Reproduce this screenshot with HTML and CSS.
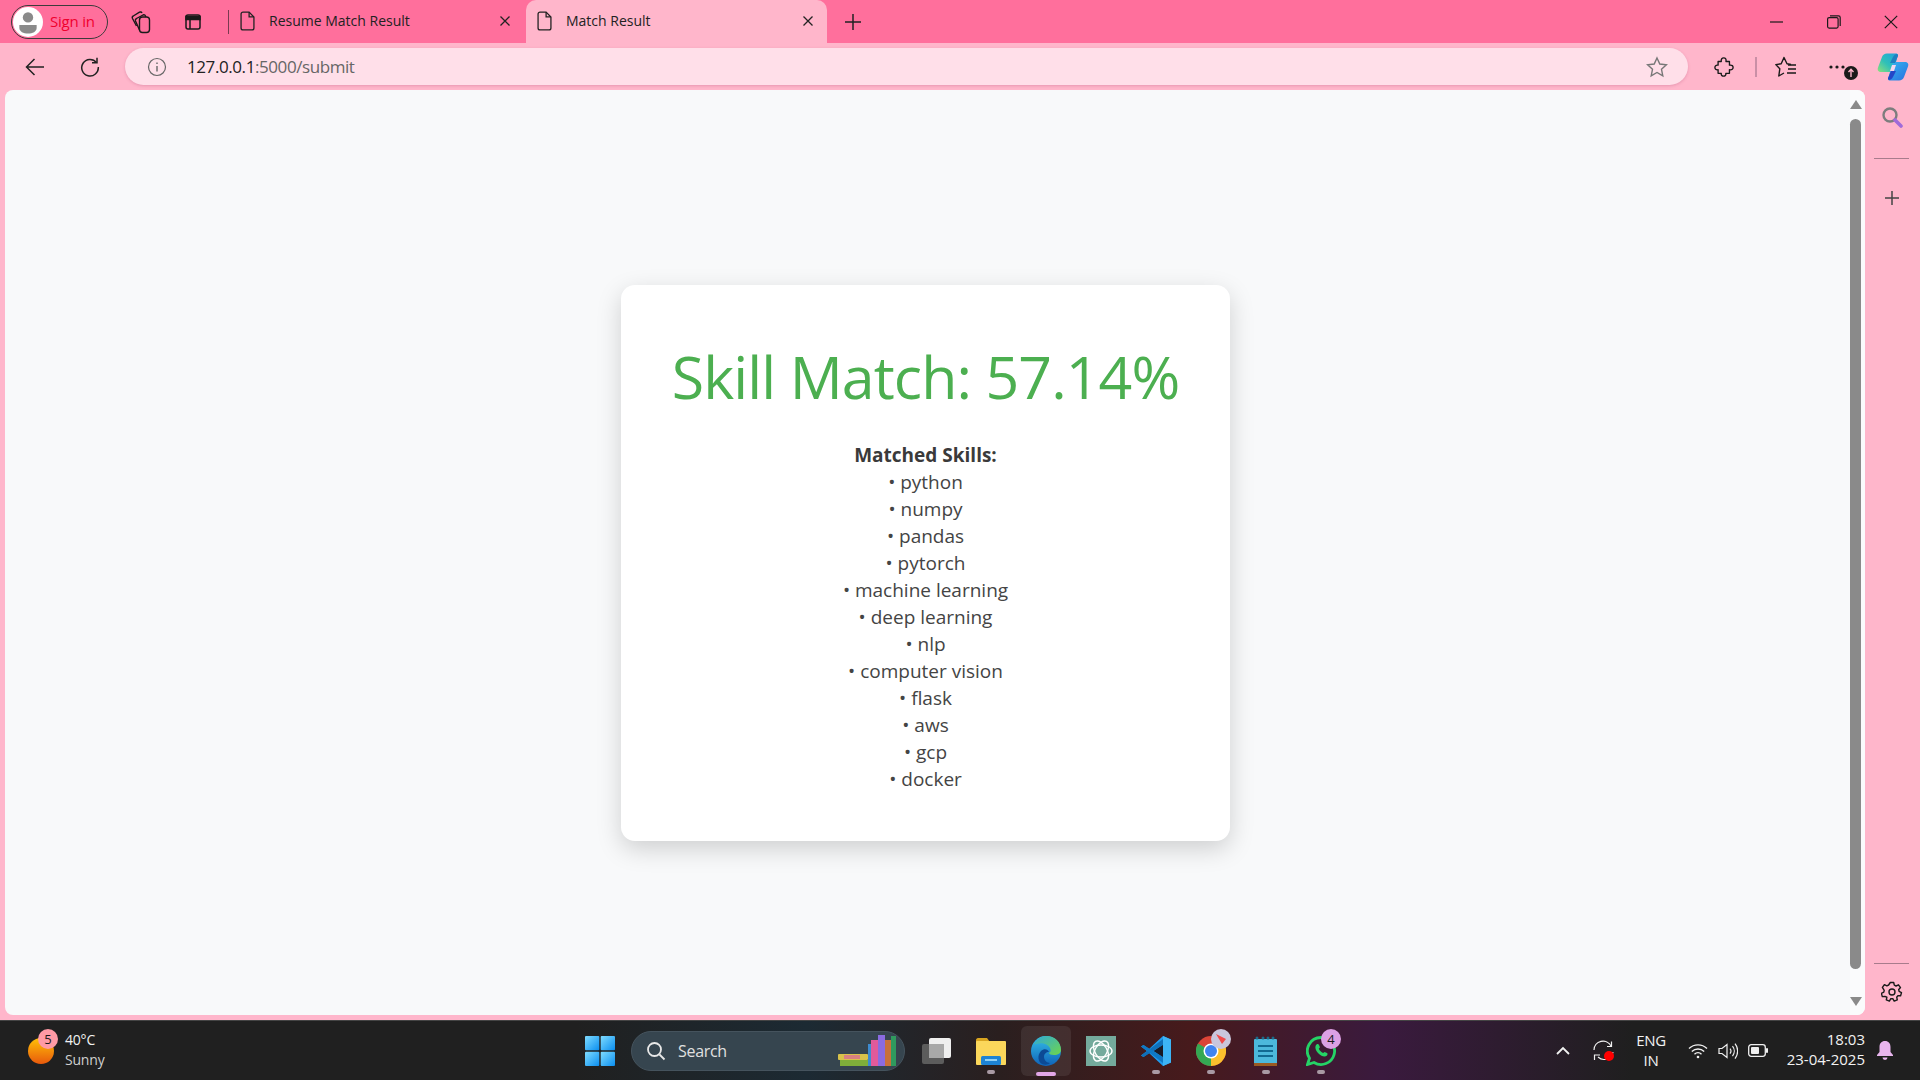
FILE: index.html
```html
<!DOCTYPE html>
<html lang="en">
<head>
<meta charset="utf-8">
<title>Match Result</title>
<link rel="stylesheet" href="styles.css">
</head>
<body>
<div class="browser">
  <header class="tabstrip">
    <div class="profile">
      <span class="avatar"><svg width="30" height="30" viewBox="0 0 26 26"><circle cx="13" cy="13" r="13" fill="#fff"/><circle cx="13" cy="9" r="4.500" fill="#8a8a8a"/><path d="M5.500 15.500h15v2.500c0 3.500-3.500 5-7.500 5s-7.500-1.500-7.500-5z" fill="#8a8a8a"/></svg></span>
      <span class="signin">Sign in</span>
    </div>
    <button class="strip-btn collections"><svg width="22" height="24" viewBox="0 0 22 24" fill="none" stroke="#1a1a1a" stroke-width="1.400"><rect x="9.500" y="7" width="10" height="15.500" rx="3"/><path d="M9.500 20 5.500 11c-.4-1 0-2 1-2.500L13 5c1-.5 2 0 2.500 1l.5 1"/><path d="M6.500 16 2.500 8.500c-.5-1-.2-2 .8-2.500L9.500 2.200c1-.5 2-.2 2.500.8"/></svg></button>
    <button class="strip-btn verttabs"><svg width="18" height="18" viewBox="0 0 18 18" fill="none" stroke="#1a1a1a" stroke-width="1.500"><rect x="2" y="2" width="14" height="14" rx="2"/><path d="M2 3.500h14v3H2z" fill="#1a1a1a"/><path d="M6 6v10"/></svg></button>
    <span class="strip-sep"></span>
    <div class="tab">
      <svg class="doc" width="15" height="20" viewBox="1 1 14 18" fill="none" stroke="#222" stroke-width="1.200"><path d="M2 3.500C2 2.500 2.800 1.700 3.800 1.700H9.500L14 6.200V16.500c0 1-.8 1.800-1.800 1.800H3.800c-1 0-1.800-.8-1.800-1.800z"/><path d="M9.500 1.700V6.200H14"/></svg>
      <span class="tab-title">Resume Match Result</span>
      <svg class="tab-close" width="12" height="12" viewBox="0 0 12 12" stroke="#222" stroke-width="1.300"><path d="M1.500 1.500l9 9M10.500 1.500l-9 9"/></svg>
    </div>
    <div class="tab active">
      <svg class="doc" width="15" height="20" viewBox="1 1 14 18" fill="none" stroke="#222" stroke-width="1.200"><path d="M2 3.500C2 2.500 2.800 1.700 3.800 1.700H9.500L14 6.200V16.500c0 1-.8 1.800-1.800 1.800H3.800c-1 0-1.800-.8-1.800-1.800z"/><path d="M9.500 1.700V6.200H14"/></svg>
      <span class="tab-title">Match Result</span>
      <svg class="tab-close" width="12" height="12" viewBox="0 0 12 12" stroke="#222" stroke-width="1.300"><path d="M1.500 1.500l9 9M10.500 1.500l-9 9"/></svg>
    </div>
    <svg class="newtab" width="18" height="18" viewBox="0 0 18 18" stroke="#222" stroke-width="1.500"><path d="M9 1v16M1 9h16"/></svg>
    <div class="window-ctrls">
      <svg width="14" height="14" viewBox="0 0 14 14" stroke="#1a1a1a" stroke-width="1.200"><path d="M0 7h13"/></svg>
      <svg width="14" height="14" viewBox="0 0 14 14" fill="none" stroke="#1a1a1a" stroke-width="1.200"><rect x=".6" y="2.600" width="10.500" height="10.500" rx="1.500"/><path d="M3 .8h8.500c1 0 1.700.7 1.700 1.700V11"/></svg>
      <svg width="14" height="14" viewBox="0 0 14 14" stroke="#1a1a1a" stroke-width="1.200"><path d="M.8.800l12.400 12.400M13.200.800L.8 13.200"/></svg>
    </div>
  </header>

  <nav class="toolbar">
    <svg class="nav-back" width="20" height="20" viewBox="0 0 20 20" fill="none" stroke="#222" stroke-width="1.500"><path d="M19 10H1.500M9.500 2l-8 8 8 8"/></svg>
    <svg class="nav-reload" width="20" height="20" viewBox="0 0 20 20" fill="none" stroke="#222" stroke-width="1.500"><path d="M16.500 5.500A8.300 8.300 0 1 0 18.300 10"/><path d="M17 .8v5h-5"/></svg>
    <div class="omnibox">
      <svg class="info" width="20" height="20" viewBox="0 0 20 20" fill="none" stroke="#666" stroke-width="1.200"><circle cx="10" cy="10" r="8.500"/><path d="M10 9v5.500M10 5.500v1.500" stroke-width="1.400"/></svg>
      <span class="url"><span class="host">127.0.0.1</span>:5000/submit</span>
      <svg class="star" width="22" height="22" viewBox="0 0 22 22" fill="none" stroke="#777" stroke-width="1.400"><path d="M11 2l2.800 6 6.600.8-4.900 4.500 1.300 6.500L11 16.500l-5.800 3.300 1.300-6.500L1.600 8.800 8.200 8z"/></svg>
    </div>
    <svg class="tool ext" width="20" height="20" viewBox="0 0 22 22" fill="none" stroke="#1a1a1a" stroke-width="1.500" stroke-linejoin="round"><path d="M4.500 5H8C7.500 2 9 1 10.700 1S13.700 2 13.200 5H17V9c3-.5 4 1 4 2.500s-1 3-4 2.500v4H13c.5 2-1 3-2.500 3S7.500 20 8 18H4.500V14C2 14.500 1 13 1 11.500S2 8.500 4.500 9z"/></svg>
    <span class="tool-sep"></span>
    <svg class="tool favs" width="22" height="22" viewBox="0 0 22 22" fill="none" stroke="#1a1a1a" stroke-width="1.400" stroke-linejoin="round"><path d="M16 8.500 12 7.800 9 1.500 6.200 7.800 0.800 8.600 4.800 12.800 3.800 20 9 17"/><path d="M13 9h8M13 13h8M12 17h9"/></svg>
    <div class="more">
      <svg width="16" height="4" viewBox="0 0 16 4" fill="#1a1a1a"><circle cx="2" cy="2" r="1.600"/><circle cx="8" cy="2" r="1.600"/><circle cx="14" cy="2" r="1.600"/></svg>
      <svg class="more-badge" width="14" height="14" viewBox="0 0 14 14"><circle cx="7" cy="7" r="7" fill="#1a1a1a"/><path d="M7 11V4M4.500 6L7 3.300 9.500 6" stroke="#ffb6cb" stroke-width="1.400" fill="none"/></svg>
    </div>
    <svg class="copilot" width="32" height="28" viewBox="0 0 32 28">
      <defs>
        <linearGradient id="cpa" x1="1" y1="0" x2="0" y2="1"><stop offset="0" stop-color="#1f9fe0"/><stop offset=".55" stop-color="#2fc0b8"/><stop offset="1" stop-color="#8fe07a"/></linearGradient>
        <linearGradient id="cpb" x1="0" y1="0" x2="1" y2="1"><stop offset="0" stop-color="#35b8f0"/><stop offset="1" stop-color="#2a6fe0"/></linearGradient>
      </defs>
      <path d="M10 .5h9c1 0 1.800.5 2 1.500L17 16c-.7 2-2 3-4 3H4c-2.500 0-4-1.700-3-4.500L5 4c.8-2.300 2.500-3.500 5-3.500z" fill="url(#cpa)"/>
      <path d="M22 27.500h-9c-1 0-1.800-.5-2-1.500l4-14c.7-2 2-3 4-3h9c2.500 0 4 1.700 3 4.500L27 24c-.8 2.300-2.500 3.500-5 3.500z" fill="url(#cpb)"/>
      <path d="M12 27c-1-.5-1-1-1-2l3-7h5l-3 6c-1 2-2.500 3-4 3z" fill="#2447c8"/>
      <path d="M20 1c1 .5 1 1 1 2l-3 7h-5l3-6c1-2 2.500-3 4-3z" fill="#1f7fc0"/>
      <path d="M15 12h4l-2 6h-4z" fill="#f4d7ee"/>
    </svg>
  </nav>

  <div class="workarea">
    <div class="viewport">
      <main class="page">
        <section class="card">
          <h1 class="score">Skill Match: 57.14%</h1>
          <div class="skills">
            <p class="skills-title">Matched Skills:</p>
            <p>• python</p>
            <p>• numpy</p>
            <p>• pandas</p>
            <p>• pytorch</p>
            <p>• machine learning</p>
            <p>• deep learning</p>
            <p>• nlp</p>
            <p>• computer vision</p>
            <p>• flask</p>
            <p>• aws</p>
            <p>• gcp</p>
            <p>• docker</p>
          </div>
        </section>
      </main>
      <div class="scrollbar">
        <span class="arrow up"></span>
        <span class="thumb"></span>
        <span class="arrow down"></span>
      </div>
    </div>
    <aside class="sidebar">
      <svg class="side-search" width="22" height="22" viewBox="0 0 22 22" fill="none"><circle cx="9" cy="9" r="6.500" stroke="#7d7d7d" stroke-width="2.400"/><path d="M14 14l6 6" stroke="#a06bd8" stroke-width="3.600" stroke-linecap="round"/></svg>
      <span class="side-div"></span>
      <svg class="side-plus" width="16" height="16" viewBox="0 0 16 16" stroke="#444" stroke-width="1.500"><path d="M8 1v14M1 8h14"/></svg>
      <span class="side-spring"></span>
      <span class="side-div"></span>
      <svg class="side-gear" width="22" height="22" viewBox="0 0 22 22" fill="none" stroke="#1a1a1a" stroke-width="1.400"><circle cx="11" cy="11" r="3"/><path d="M9.300 1.500h3.400l.6 2.700 1.700.8 2.500-1.200 2 2.800-1.800 1.900.4 1.900 2.400 1.200-.9 3.200-2.700-.1-1.200 1.500.6 2.700-3.100 1.200-1.400-2.400h-2l-1.400 2.400-3.100-1.200.6-2.700L4 15.500l-2.700.1-.9-3.200 2.400-1.200.4-1.900L1.400 6.400l2-2.800 2.500 1.200 1.700-.8z" stroke-linejoin="round"/></svg>
    </aside>
  </div>

  <footer class="taskbar">
    <div class="weather">
      <div class="sun">
        <svg width="26" height="28" viewBox="0 0 26 28"><defs><linearGradient id="sunf" x1="0" y1="0" x2="0" y2="1"><stop offset="0" stop-color="#ffc107"/><stop offset="1" stop-color="#e8590c"/></linearGradient></defs><circle cx="13" cy="14" r="13" fill="url(#sunf)"/></svg>
        <span class="sun-badge">5</span>
      </div>
      <div class="weather-text"><span class="temp">40°C</span><span class="cond">Sunny</span></div>
    </div>
    <div class="center-icons">
      <svg class="winlogo" width="30" height="30" viewBox="0 0 30 30"><defs><linearGradient id="win" x1="0" y1="0" x2="1" y2="1"><stop offset="0" stop-color="#7fdcff"/><stop offset="1" stop-color="#0a8ef0"/></linearGradient></defs><rect x="0" y="0" width="14.300" height="14.300" rx="1" fill="url(#win)"/><rect x="15.700" y="0" width="14.300" height="14.300" rx="1" fill="url(#win)"/><rect x="0" y="15.700" width="14.300" height="14.300" rx="1" fill="url(#win)"/><rect x="15.700" y="15.700" width="14.300" height="14.300" rx="1" fill="url(#win)"/></svg>
      <div class="search">
        <svg width="20" height="20" viewBox="0 0 20 20" fill="none" stroke="#e8e8e8" stroke-width="1.800"><circle cx="8.500" cy="8.500" r="6.500"/><path d="M13.500 13.500l5 5"/></svg>
        <span class="search-label">Search</span>
        <svg class="books" width="66" height="32" viewBox="0 0 66 32"><rect x="2" y="19" width="30" height="6" rx="1" fill="#d8c24a"/><rect x="8" y="20" width="16" height="4" fill="#d88080"/><rect x="4" y="25" width="28" height="6" fill="#7fae3a"/><rect x="32" y="9" width="3" height="22" fill="#3d8bd0"/><rect x="35" y="5" width="7" height="26" fill="#e25a9a"/><rect x="42" y="0" width="7" height="31" fill="#8a6be0"/><rect x="49" y="5" width="6" height="26" fill="#c8703a"/><rect x="55" y="1" width="5" height="30" fill="#2f9a5e"/></svg>
      </div>
      <div class="task-icon taskview"><svg width="30" height="30" viewBox="0 0 30 30"><rect x="1" y="8" width="22" height="20" rx="2" fill="#5c5c5c"/><rect x="8" y="2" width="22" height="20" rx="2" fill="#efefef"/><rect x="8" y="8" width="15" height="14" fill="#a8a8a8"/></svg></div>
      <div class="task-icon pinned"><svg width="30" height="28" viewBox="0 0 30 28"><path d="M0 3c0-1 .8-2 2-2h9l3 4H0z" fill="#d9a520"/><rect x="0" y="4" width="30" height="24" rx="1" fill="#fbd75b"/><rect x="5" y="19" width="20" height="9" rx="1.500" fill="#1d83d4"/><rect x="9" y="22" width="12" height="2" fill="#8fd0f5"/></svg><span class="dot"></span></div>
      <div class="task-icon edge-tile">
        <svg width="30" height="30" viewBox="0 0 30 30"><defs><linearGradient id="ea" x1="0" y1="0" x2="0" y2="1"><stop offset="0" stop-color="#36c0e8"/><stop offset="1" stop-color="#0f62b8"/></linearGradient><linearGradient id="eb" x1="0" y1="0" x2="1" y2="1"><stop offset="0" stop-color="#2fa9d8"/><stop offset="1" stop-color="#6fd64a"/></linearGradient></defs><circle cx="15" cy="15" r="15" fill="url(#ea)"/><path d="M3 8C6 3 10 0 15 0c9 0 15 6 15 14 0 3-3 5-7 5-3 0-5-1-5-2 2-1 2-3 1-5-2-4-8-6-14-4z" fill="url(#eb)"/><path d="M11 28c-4-2-5-9-1-13 3-3 7-2 8 1-3 0-5 2-5 5 0 3 3 6 6 6-2 2-5 2-8 1z" fill="#0c4a94"/></svg>
        <span class="dot active-dot"></span>
      </div>
      <div class="task-icon pinned"><svg width="30" height="30" viewBox="0 0 30 30"><rect width="30" height="30" fill="#74aa9c"/><g fill="none" stroke="#fff" stroke-width="1.400"><ellipse cx="15" cy="15" rx="11" ry="6"/><ellipse cx="15" cy="15" rx="11" ry="6" transform="rotate(60 15 15)"/><ellipse cx="15" cy="15" rx="11" ry="6" transform="rotate(120 15 15)"/></g></svg></div>
      <div class="task-icon pinned"><svg width="30" height="30" viewBox="0 0 30 30"><path d="M22 0l8 3.500v23L22 30 8 17l-5.500 4L0 19.500 6 15 0 10.500 2.500 9 8 13z" fill="#1f9cf0"/><path d="M22 0v30l8-3.500v-23z" fill="#3db4f5"/><path d="M22 8.500L12.500 15l9.500 6.500z" fill="#1a1a24"/><path d="M0 19.500L22 3v6L2.500 21z" fill="#0f6fb8"/><path d="M0 10.500L22 27v-6L2.500 9z" fill="#0f78c4"/></svg><span class="dot"></span></div>
      <div class="task-icon pinned"><svg width="30" height="30" viewBox="0 0 30 30"><circle cx="15" cy="15" r="15" fill="#dc4437"/><path d="M15 15L28 7.500A15 15 0 0 1 15 30z" fill="#fbc02d"/><path d="M15 15L15 30A15 15 0 0 1 2 7.500z" fill="#34a853"/><circle cx="15" cy="15" r="7.500" fill="#fff"/><circle cx="15" cy="15" r="6" fill="#3f84f0"/></svg><span class="tile-badge tile-chrome"><svg width="12" height="12" viewBox="0 0 12 12"><path d="M1 1l10 5-4 5z" fill="#ef4a4a"/></svg></span><span class="dot"></span></div>
      <div class="task-icon pinned"><svg width="24" height="30" viewBox="0 0 24 30"><rect x="0" y="3" width="23" height="27" rx="1" fill="#4cb8dc"/><rect x="0" y="27" width="23" height="3" fill="#9a5a22"/><g stroke="#126a92" stroke-width="2"><path d="M4 10h15M4 15h15M4 20h15"/></g><g fill="#1a6a88"><circle cx="3" cy="2" r="1.500"/><circle cx="9" cy="2" r="1.500"/><circle cx="14" cy="2" r="1.500"/><circle cx="19" cy="2" r="1.500"/></g></svg><span class="dot"></span></div>
      <div class="task-icon pinned"><svg width="30" height="30" viewBox="0 0 30 30"><path d="M15 1.500A13.500 13.500 0 1 1 8 26.500L1.500 28.500l2-6.200A13.500 13.500 0 0 1 15 1.500z" fill="none" stroke="#25d366" stroke-width="2.800"/><path d="M10.500 8.500c1-.7 2-.7 2.500.5l1 2.300-1.200 1.500c1 2 2.400 3.300 4.300 4.300l1.500-1.200 2.400 1.200c.8.500.7 1.500 0 2.300-2 2-5.500 1-8.500-2-3.300-3.200-4-6.800-2-8.900z" fill="#25d366"/></svg><span class="tile-badge tile-wa">4</span><span class="dot"></span></div>
    </div>
    <div class="tray">
      <svg class="tray-chev" width="14" height="9" viewBox="0 0 14 9" fill="none" stroke="#f2f2f2" stroke-width="1.800"><path d="M1 8l6-6 6 6"/></svg>
      <svg class="tray-sync" width="22" height="22" viewBox="0 0 22 22" fill="none" stroke="#f0f0f0" stroke-width="1.200"><path d="M1 10A9 9 0 0 1 18 6"/><path d="M18.500 1.500V6.500H14"/><path d="M20 12a9 9 0 0 1-15 5"/><path d="M1.500 20V15H7"/><circle cx="16" cy="16" r="5" fill="#f00" stroke="none"/></svg>
      <div class="lang"><span>ENG</span><span>IN</span></div>
      <svg class="tray-wifi" width="20" height="16" viewBox="0 0 20 16" fill="none" stroke="#f0f0f0" stroke-width="1.400"><path d="M1 5.500a13 13 0 0 1 18 0M3.800 8.500a9 9 0 0 1 12.400 0M6.500 11.200a5 5 0 0 1 7 0"/><circle cx="10" cy="14" r="1.300" fill="#f0f0f0" stroke="none"/></svg>
      <svg class="tray-vol" width="20" height="18" viewBox="0 0 20 18" fill="none" stroke="#f0f0f0" stroke-width="1.200"><path d="M1 6.500h3L9 2.500v13L4 11.500H1z"/><path d="M12 6.500a4 4 0 0 1 0 5M14.500 4a8 8 0 0 1 0 10M17 1.500a12 12 0 0 1 0 15"/></svg>
      <svg class="tray-bat" width="20" height="13" viewBox="0 0 20 13"><rect x=".7" y=".7" width="16.600" height="11.600" rx="2.500" fill="none" stroke="#f0f0f0" stroke-width="1.300"/><rect x="3" y="3" width="8" height="7" rx="1" fill="#f0f0f0"/><rect x="18" y="4" width="2" height="5" rx="1" fill="#f0f0f0"/></svg>
      <div class="clock"><span>18:03</span><span>23-04-2025</span></div>
      <svg class="tray-bell" width="18" height="20" viewBox="0 0 18 20" fill="#e9b5ee"><path d="M9 0c3.500 0 5.500 2.500 5.500 6v5l2.500 3v1H1v-1l2.500-3V6C3.500 2.500 5.500 0 9 0z"/><path d="M6.500 16.500h5a2.500 2.500 0 0 1-5 0z"/></svg>
    </div>
  </footer>
</div>
</body>
</html>
```

FILE: styles.css
```css
* { box-sizing: border-box; }
html, body { margin: 0; height: 100%; overflow: hidden; }
body { font-family: "Open Sans", "Liberation Sans", sans-serif; }
p, h1 { margin: 0; }

.browser { display: flex; flex-direction: column; width: 1920px; height: 1080px; background: #ffb6cb; }

/* tab strip */
.tabstrip { display: flex; align-items: center; height: 43px; background: #ff6f9c; flex: none; padding-left: 11px; }
.profile { display: flex; align-items: center; gap: 7px; width: 97px; height: 34px; border: 1.500px solid #3c3c3c; border-radius: 17px; padding-left: 1px; flex: none; }
.avatar { display: flex; }
.signin { font-size: 15px; letter-spacing: -.2px; color: #f0002e; margin-bottom: 2px; }
.strip-btn { display: flex; align-items: center; justify-content: center; border: 0; padding: 0; background: none; width: 22px; height: 22px; flex: none; }
.collections { margin-left: 22px; }
.verttabs { margin-left: 30px; }
.strip-sep { width: 1px; height: 24px; background: #7a3a50; margin-left: 24px; flex: none; }
.tab { display: flex; align-items: center; width: 295px; height: 43px; padding: 0 0 2px 11px; flex: none; }
.tab .doc { flex: none; }
.tab-title { font-size: 14px; color: #222; margin-left: 14px; white-space: nowrap; }
.tab-close { margin-left: auto; margin-right: 13px; flex: none; }
.tab.active { width: 301px; margin-left: 2px; background: #ffb6cb; border-radius: 10px 10px 0 0; padding-left: 11px; }
.newtab { margin-left: 17px; flex: none; }
.window-ctrls { display: flex; align-items: center; gap: 43px; margin-left: auto; padding-right: 22px; }

/* toolbar */
.toolbar { display: flex; align-items: center; height: 47px; flex: none; padding-left: 25px; }
.nav-back { flex: none; }
.nav-reload { margin-left: 35px; flex: none; }
.omnibox { display: flex; align-items: center; width: 1563px; height: 37px; margin-left: 25px; border-radius: 19px; background: #ffdfe9; padding-left: 22px; box-shadow: 0 1px 3px rgba(160, 60, 100, .25); flex: none; }
.url { font-size: 17px; letter-spacing: -.42px; color: #666; margin-left: 20px; }
.host { color: #222; }
.star { margin-left: auto; margin-right: 20px; }
.tool { flex: none; }
.ext { margin-left: 26px; }
.tool-sep { width: 2px; height: 20px; background: #c98fa6; margin-left: 21px; flex: none; }
.favs { margin-left: 18px; }
.more { position: relative; display: flex; align-items: center; margin-left: 32px; flex: none; }
.more-badge { position: absolute; left: 15px; top: 1px; }
.copilot { margin-left: 32px; flex: none; }

/* work area */
.workarea { display: flex; height: 925px; flex: none; }
.viewport { display: flex; width: 1860px; margin-left: 5px; background: #f8f9fa; border-radius: 8px; overflow: hidden; flex: none; }
.page { flex: 1; display: flex; justify-content: center; align-items: flex-start; padding: 195px 4px 0 0; }
.card { display: flex; flex-direction: column; align-items: center; width: 609px; height: 556px; padding-top: 51px; background: #fff; border-radius: 14px; box-shadow: 0 8px 24px rgba(0, 0, 0, .17); }
.score { font-size: 59px; font-weight: 400; line-height: 80px; letter-spacing: -.9px; color: #4caf50; }
.skills { margin-top: 26px; font-size: 19px; line-height: 27px; color: #444; text-align: center; }
.skills-title { font-weight: 700; color: #3a3a3a; }

.scrollbar { display: flex; flex-direction: column; align-items: center; width: 15px; padding: 10px 4px 9px 0; background: #fafbfc; }
.arrow { width: 0; height: 0; border-left: 6.500px solid transparent; border-right: 6.500px solid transparent; flex: none; }
.arrow.up { border-bottom: 9px solid #8a8a8a; }
.arrow.down { border-top: 9px solid #8a8a8a; }
.thumb { width: 11px; flex: 1; margin: 10px 0 28px; border-radius: 6px; background: #8a8a8a; }

.sidebar { flex: 1; display: flex; flex-direction: column; align-items: center; padding: 16px 2px 0 0; }
.side-div { width: 35px; height: 1px; background: #a87b8c; flex: none; }
.side-search { margin-bottom: 30px; flex: none; }
.side-plus { margin-top: 31px; flex: none; }
.side-spring { flex: 1; }
.side-gear { margin: 17px 0 12px; flex: none; }

/* taskbar */
.taskbar { display: flex; align-items: center; height: 60px; flex: none; margin-top: 5px; color: #f2f2f2; border-top: 1px solid #444; background: linear-gradient(90deg, #202020 0, #202020 30%, #1c2a33 42%, #2a1f1f 52%, #471a1c 62%, #3a1a3e 72%, #2e1c30 78%, #1f1f1f 85%, #1f1f1f 100%); }
.weather { display: flex; align-items: center; width: 585px; padding-left: 28px; flex: none; }
.sun { position: relative; display: flex; }
.sun-badge { position: absolute; left: 10px; top: -8px; width: 20px; height: 20px; border-radius: 50%; background: #ff9aa5; color: #1a1a1a; font-size: 13px; line-height: 20px; text-align: center; }
.weather-text { display: flex; flex-direction: column; margin: 0 0 1px 11px; font-size: 14px; line-height: 20.500px; letter-spacing: -.2px; }
.cond { color: #cfcfcf; }
.center-icons { display: flex; align-items: center; flex: none; }
.winlogo { flex: none; }
.search { display: flex; align-items: center; width: 274px; height: 40px; margin-left: 16px; padding-left: 14px; border-radius: 20px; background: #36454f; border: 1px solid #45535d; flex: none; }
.search-label { font-size: 16px; letter-spacing: -.3px; margin-left: 12px; color: #e0e0e0; }
.books { margin-left: auto; margin-right: 2px; }
.task-icon { position: relative; display: flex; align-items: center; justify-content: center; width: 55px; height: 50px; flex: none; }
.taskview { margin-left: 3px; width: 55px; }
.edge-tile { width: 50px; margin: 0 2.500px; background: rgba(255, 255, 255, .08); border-radius: 6px; }
.dot { position: absolute; left: 50%; bottom: 2px; width: 8px; height: 4px; margin-left: -4px; border-radius: 2px; background: #a99aa4; }
.active-dot { width: 20px; margin-left: -10px; background: #e2a6e6; bottom: 0; }
.tile-badge { position: absolute; left: 28px; top: 3px; display: flex; align-items: center; justify-content: center; width: 20px; height: 20px; border-radius: 50%; font-size: 13px; color: #1a1a1a; }
.tile-chrome { background: #c9c6dc; }
.tile-wa { background: #dca0e4; }
.tray { display: flex; align-items: center; flex: 1; }
.tray-chev { margin-left: 208px; flex: none; }
.tray-sync { margin-left: 23px; flex: none; }
.lang { display: flex; flex-direction: column; align-items: center; width: 36px; margin: 0 0 2px 18px; font-size: 15px; line-height: 20px; letter-spacing: -.3px; }
.tray-wifi { margin-left: 19px; flex: none; }
.tray-vol { margin-left: 10px; flex: none; }
.tray-bat { margin-left: 10px; flex: none; }
.clock { display: flex; flex-direction: column; align-items: flex-end; width: 85px; margin: 0 0 3px 12px; font-size: 15px; line-height: 20px; }
.tray-bell { margin-left: 11px; flex: none; }
```
